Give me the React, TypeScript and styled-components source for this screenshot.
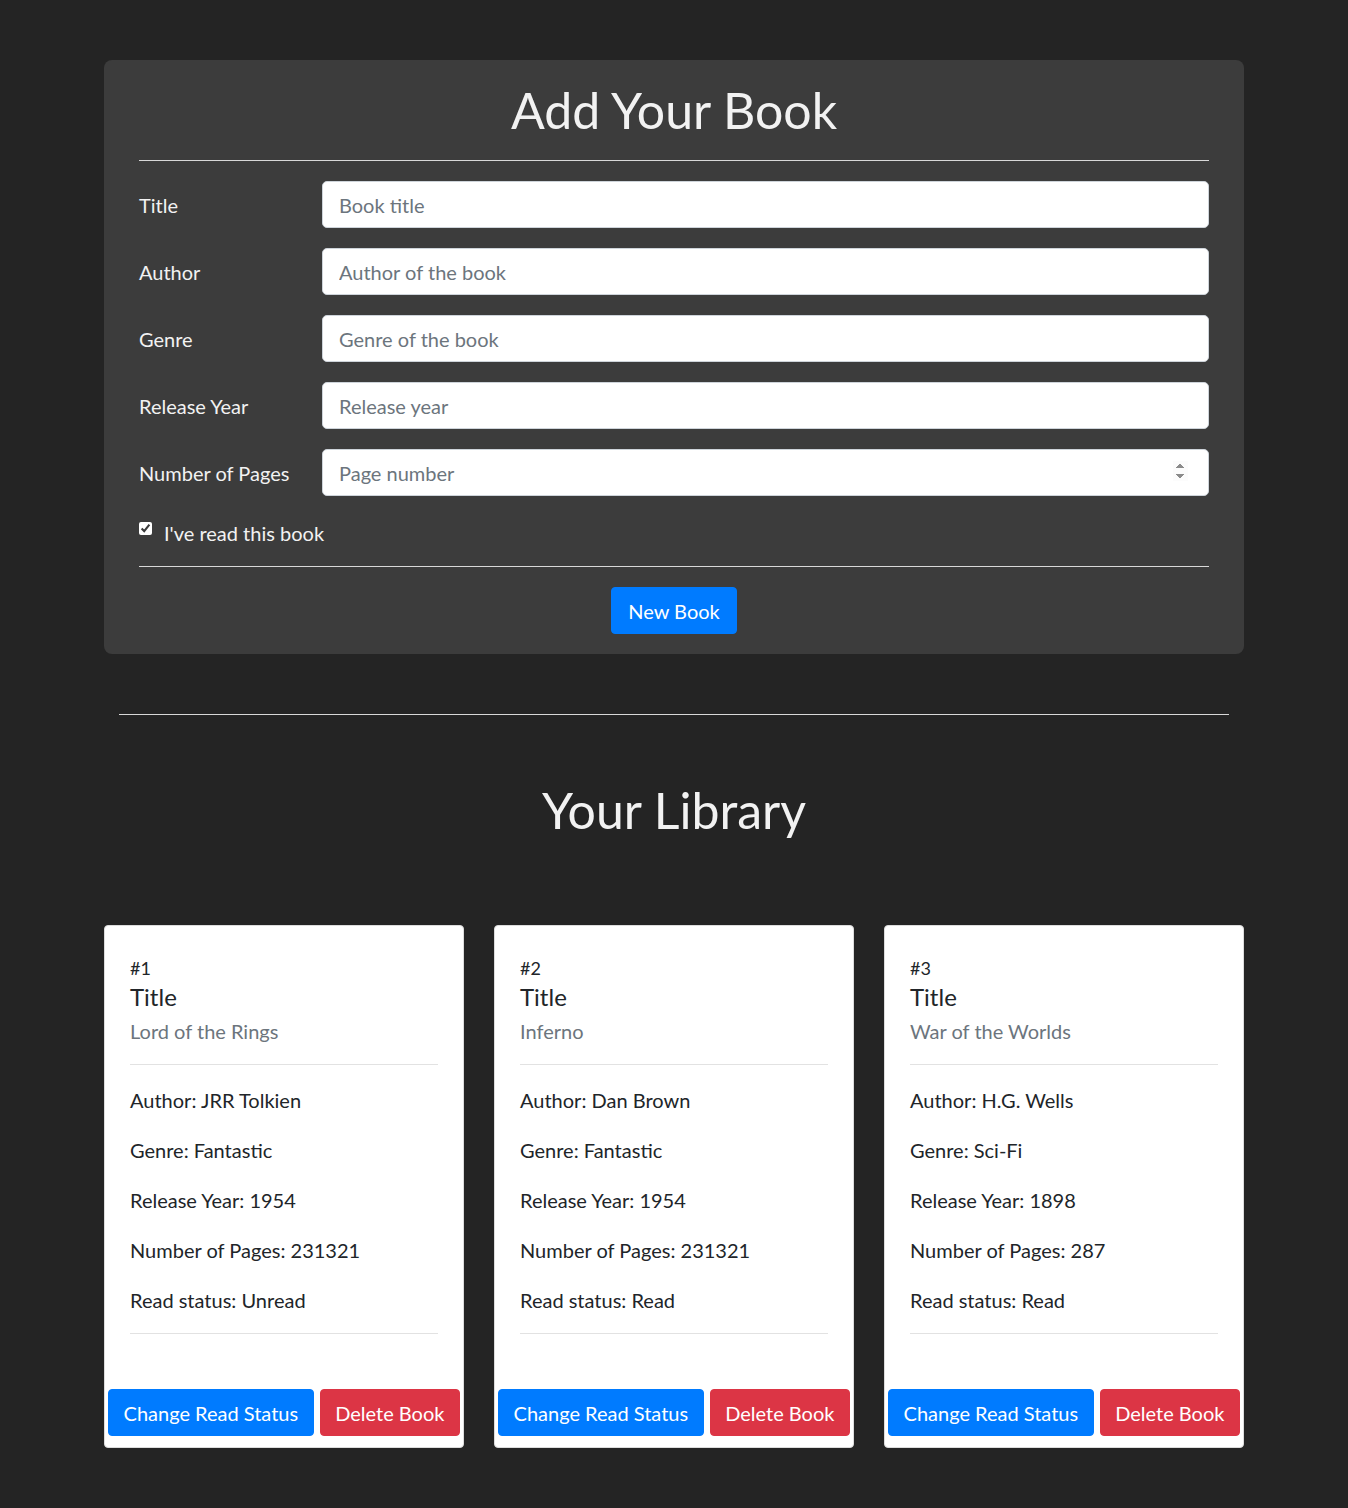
import { createGlobalStyle } from 'styled-components'
import styled from 'styled-components'

const GlobalStyle = createGlobalStyle`
  * { box-sizing: border-box; }
  body {
    margin: 0;
    background: #242424;
    font-family: Lato, "Open Sans", sans-serif;
    color: #f2f2f2;
  }
`

type Book = {
  id: number
  title: string
  author: string
  genre: string
  year: number
  pages: number
  read: boolean
}

const books: Book[] = [
  { id: 1, title: 'Lord of the Rings', author: 'JRR Tolkien', genre: 'Fantastic', year: 1954, pages: 231321, read: false },
  { id: 2, title: 'Inferno', author: 'Dan Brown', genre: 'Fantastic', year: 1954, pages: 231321, read: true },
  { id: 3, title: 'War of the Worlds', author: 'H.G. Wells', genre: 'Sci-Fi', year: 1898, pages: 287, read: true },
]

const fields = [
  { label: 'Title', placeholder: 'Book title', type: 'text' },
  { label: 'Author', placeholder: 'Author of the book', type: 'text' },
  { label: 'Genre', placeholder: 'Genre of the book', type: 'text' },
  { label: 'Release Year', placeholder: 'Release year', type: 'text' },
  { label: 'Number of Pages', placeholder: 'Page number', type: 'number' },
]

export default function App() {
  return (
    <>
      <GlobalStyle />
      <Page>
        <FormPanel>
          <Heading>Add Your Book</Heading>
          <Rule />
          <Fields>
            {fields.map((f) => (
              <FieldRow key={f.label}>
                <FieldLabel>{f.label}</FieldLabel>
                <Input type={f.type} placeholder={f.placeholder} />
              </FieldRow>
            ))}
          </Fields>
          <CheckRow>
            <input type='checkbox' defaultChecked />
            <span>I've read this book</span>
          </CheckRow>
          <Rule />
          <Center>
            <Button $variant='primary'>New Book</Button>
          </Center>
        </FormPanel>

        <Divider />

        <Heading as='h2' $size={50}>Your Library</Heading>

        <Cards>
          {books.map((b) => (
            <Card key={b.id}>
              <CardBody>
                <Num>#{b.id}</Num>
                <CardTitle>Title</CardTitle>
                <Subtitle>{b.title}</Subtitle>
                <CardRule $top={18} />
                <Line>Author: {b.author}</Line>
                <Line>Genre: {b.genre}</Line>
                <Line>Release Year: {b.year}</Line>
                <Line>Number of Pages: {b.pages}</Line>
                <Line>Read status: {b.read ? 'Read' : 'Unread'}</Line>
                <CardRule $top={18} />
              </CardBody>
              <CardFooter>
                <Button $variant='primary'>Change Read Status</Button>
                <Button $variant='danger'>Delete Book</Button>
              </CardFooter>
            </Card>
          ))}
        </Cards>
      </Page>
    </>
  )
}

const Page = styled.div`
  width: 1140px;
  margin: 0 auto;
  padding: 60px 0 60px;
`

const FormPanel = styled.section`
  background: #3c3c3c;
  border-radius: 8px;
  padding: 20px 35px 20px;
`

const Heading = styled.h1<{ $size?: number }>`
  margin: 0 0 20px;
  text-align: center;
  font-weight: 400;
  font-size: ${(p) => p.$size || 50}px;
  line-height: 60px;
  color: #f2f2f2;
`

const Rule = styled.hr`
  border: 0;
  border-top: 1px solid #d8d8d8;
  margin: 0 0 20px;
`

const Fields = styled.div`
  display: flex;
  flex-direction: column;
  gap: 20px;
`

const FieldRow = styled.div`
  display: flex;
  align-items: center;
`

const FieldLabel = styled.label`
  width: 183px;
  flex-shrink: 0;
  font-size: 20px;
  color: #f2f2f2;
`

const Input = styled.input`
  flex: 1;
  height: 47px;
  padding: 0 16px;
  font-family: inherit;
  font-size: 20px;
  color: #495057;
  background: #fff;
  border: 1px solid #ced4da;
  border-radius: 5px;
  &::placeholder { color: #6c757d; }
  &::-webkit-inner-spin-button,
  &::-webkit-outer-spin-button {
    opacity: 1;
    height: 20px;
    margin-right: 4px;
  }
`

const CheckRow = styled.label`
  display: flex;
  align-items: center;
  gap: 12px;
  height: 30px;
  margin: 22px 0 18px;
  font-size: 20px;
  color: #f2f2f2;
  input {
    margin: 0;
    width: 13px;
    height: 13px;
    position: relative;
    top: -5px;
    accent-color: #ffffff;
  }
`

const Center = styled.div`
  display: flex;
  justify-content: center;
`

const Button = styled.button<{ $variant: 'primary' | 'danger' }>`
  height: 47px;
  padding: 0 16px;
  font-family: inherit;
  font-size: 20px;
  color: #fff;
  border: 1px solid ${(p) => (p.$variant === 'primary' ? '#007bff' : '#dc3545')};
  background: ${(p) => (p.$variant === 'primary' ? '#007bff' : '#dc3545')};
  border-radius: 4px;
  white-space: nowrap;
  cursor: pointer;
`

const Divider = styled.hr`
  border: 0;
  border-top: 1px solid #d8d8d8;
  margin: 60px 15px 65px;
`

const Cards = styled.div`
  display: grid;
  grid-template-columns: repeat(3, 360px);
  gap: 30px;
  margin-top: 85px;
`

const Card = styled.article`
  background: #fff;
  border: 1px solid #dcdcdc;
  border-radius: 4px;
  color: #212529;
  display: flex;
  flex-direction: column;
`

const CardBody = styled.div`
  padding: 25px 25px 0;
`

const Num = styled.div`
  font-size: 18px;
  line-height: 30px;
  margin-top: 2px;
`

const CardTitle = styled.div`
  font-size: 24px;
  line-height: 30px;
  margin-top: -1px;
`

const Subtitle = styled.div`
  font-size: 20px;
  line-height: 30px;
  margin-top: 4px;
  color: #6c757d;
`

const CardRule = styled.hr<{ $top: number }>`
  border: 0;
  border-top: 1px solid #e2e2e2;
  margin: ${(p) => p.$top}px 0 20px;
`

const Line = styled.p`
  margin: 0 0 20px;
  font-size: 20px;
  line-height: 30px;
  &:last-of-type { margin-bottom: 0; }
`

const CardFooter = styled.div`
  display: flex;
  gap: 6px;
  padding: 35px 3px 11px;
  ${Button} {
    flex: 1 1 auto;
    min-width: 0;
    padding: 0 8px;
  }
`
